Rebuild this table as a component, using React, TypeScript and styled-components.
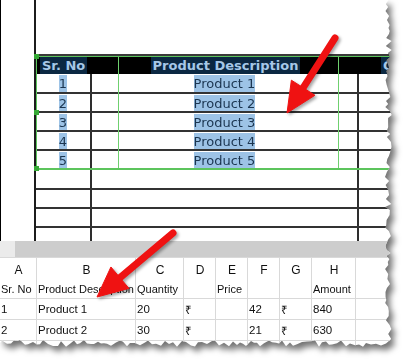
import styled, { createGlobalStyle } from 'styled-components'

const GlobalStyle = createGlobalStyle`
  * { box-sizing: border-box; }
  body {
    margin: 0;
    background: #ffffff;
  }
`

// jagged "torn paper" outline for the right and bottom edges
function tornEdge(w: number, h: number) {
  let seed = 7
  const rnd = () => {
    seed = (seed * 9301 + 49297) % 233280
    return seed / 233280
  }
  const pts: string[] = ['0px 0px']
  for (let y = 0; y < h - 6; y += 3 + Math.floor(rnd() * 3)) {
    pts.push(`${(w - 7 + rnd() * 7).toFixed(1)}px ${y}px`)
  }
  for (let x = w - 6; x > 0; x -= 3 + Math.floor(rnd() * 3)) {
    pts.push(`${x}px ${(h - 7 + rnd() * 7).toFixed(1)}px`)
  }
  pts.push(`0px ${h - 4}px`)
  return pts.join(', ')
}

const Stage = styled.div`
  position: relative;
  width: 405px;
  height: 362px;
  overflow: hidden;
  background: #ffffff;
`

const Shadow = styled.div`
  width: 392px;
  height: 347px;
  filter: drop-shadow(4px 5px 3px rgba(0, 0, 0, 0.55));
`

const Paper = styled.div`
  width: 392px;
  height: 347px;
  background: #ffffff;
  clip-path: polygon(${tornEdge(392, 347)});
  display: flex;
  flex-direction: column;
  overflow: hidden;
`

/* ---------- print layout (top) ---------- */

const Layout = styled.div`
  display: flex;
  height: 241px;
  flex: none;
`

const Margin = styled.div`
  flex: none;
  width: 36px;
  border-left: 1px solid #000;
  border-right: 2px solid #1c1c1c;
`

const Sheet = styled.div`
  position: relative;
  flex: 1;
  min-width: 0;
  display: flex;
  flex-direction: column;
  font-family: 'DejaVu Sans', Verdana, sans-serif;
  font-size: 13px;
`

const TopSpace = styled.div`
  height: 54px;
  flex: none;
`

const Row = styled.div<{ $h?: number; $line?: boolean }>`
  display: grid;
  grid-template-columns: 56px 267px minmax(0, 1fr);
  height: ${(p) => (p.$h ? `${p.$h}px` : 'auto')};
  flex: ${(p) => (p.$h ? 'none' : '1')};
  border-bottom: ${(p) => (p.$line ? '2px solid #333333' : 'none')};
`

const HeadRow = styled(Row)`
  background: #000000;
  border-top: 2px solid #3a3a3a;
`

const Cell = styled.div<{ $divider?: boolean; $start?: boolean; $pad?: number }>`
  display: flex;
  justify-content: ${(p) => (p.$start ? 'flex-start' : 'center')};
  padding-left: ${(p) => p.$pad ?? 0}px;
  overflow: hidden;
  border-right: ${(p) => (p.$divider ? '2px solid #2e2e2e' : 'none')};
`

const HeadMark = styled.span`
  display: flex;
  align-items: center;
  padding: 0 2px;
  background: #0b2842;
  color: #a6c8e8;
  font-weight: bold;
  white-space: nowrap;
`

const Mark = styled.span`
  display: flex;
  align-items: center;
  margin-top: 1px;
  background: #9dc3e6;
  color: #1b3550;
  white-space: nowrap;
`

const Selection = styled.div`
  position: absolute;
  left: 0;
  top: 56px;
  width: 400px;
  height: 114px;
  border: 1px solid #5cc45c;
  border-bottom-width: 2px;
  pointer-events: none;
`

const SelLine = styled.div<{ $x: number }>`
  position: absolute;
  top: 0;
  bottom: 0;
  left: ${(p) => p.$x}px;
  width: 1px;
  background: #6fd06f;
`

const Handle = styled.div<{ $y: number }>`
  position: absolute;
  left: -3px;
  top: ${(p) => p.$y}px;
  width: 5px;
  height: 5px;
  background: #35a935;
`

/* ---------- spreadsheet (bottom) ---------- */

const Bar = styled.div`
  display: flex;
  height: 16px;
  flex: none;
`

const BarCap = styled.div`
  width: 15px;
  background: #ebebeb;
`

const BarFill = styled.div`
  flex: 1;
  background: #cdcdcd;
`

const Grid = styled.div`
  display: grid;
  grid-template-columns: 37px 99px 48px 32px 32px 32px 32px 44px minmax(0, 1fr);
  grid-template-rows: 41px 21px 21px 21px;
  border-top: 1px solid #d9d9d9;
  font-family: 'Liberation Sans', Arial, sans-serif;
  font-size: 11.5px;
  color: #111111;
`

const GCell = styled.div<{ $tall?: boolean }>`
  display: flex;
  flex-direction: column;
  justify-content: ${(p) => (p.$tall ? 'flex-start' : 'center')};
  padding-left: 1px;
  border-right: 1px solid #d9d9d9;
  border-bottom: 1px solid #d9d9d9;
  white-space: nowrap;
`

const Letter = styled.div`
  height: 24px;
  display: flex;
  align-items: center;
  justify-content: center;
  font-size: 12px;
`

const FieldName = styled.div`
  height: 14px;
  display: flex;
  align-items: center;
  font-size: 11px;
`

const ArrowLayer = styled.svg`
  position: absolute;
  left: 0;
  top: 0;
  filter: drop-shadow(2px 2px 1.5px rgba(0, 0, 0, 0.35));
  pointer-events: none;
`

function Arrow({ tail, tip }: { tail: [number, number]; tip: [number, number] }) {
  const dx = tip[0] - tail[0]
  const dy = tip[1] - tail[1]
  const len = Math.hypot(dx, dy)
  const ux = dx / len
  const uy = dy / len
  const bx = tip[0] - ux * 30
  const by = tip[1] - uy * 30
  const px = -uy * 14
  const py = ux * 14
  return (
    <g fill="#ef1212" stroke="#ef1212">
      <line x1={tail[0]} y1={tail[1]} x2={bx + ux * 2} y2={by + uy * 2} strokeWidth={7} strokeLinecap="round" />
      <polygon points={`${tip[0]},${tip[1]} ${bx + px},${by + py} ${bx - px},${by - py}`} strokeWidth={1} strokeLinejoin="round" />
    </g>
  )
}

const columns = ['A', 'B', 'C', 'D', 'E', 'F', 'G', 'H', '']
const fields = ['Sr. No', 'Product Description', 'Quantity', '', 'Price', '', '', 'Amount', '']
const data = [
  ['1', 'Product 1', '20', '₹', '', '42', '₹', '840', ''],
  ['2', 'Product 2', '30', '₹', '', '21', '₹', '630', ''],
  ['', '', '', '', '', '', '', '', ''],
]
const products = ['1', '2', '3', '4', '5']

export default function App() {
  return (
    <Stage>
      <GlobalStyle />
      <Shadow>
        <Paper>
          <Layout>
            <Margin />
            <Sheet>
              <TopSpace />
              <HeadRow $h={20}>
                <Cell $start $pad={4}>
                  <HeadMark>Sr. No</HeadMark>
                </Cell>
                <Cell>
                  <HeadMark>Product Description</HeadMark>
                </Cell>
                <Cell $start $pad={22}>
                  <HeadMark>Quantity</HeadMark>
                </Cell>
              </HeadRow>
              {products.map((n, i) => (
                <Row key={n} $h={i === 0 ? 20 : 19} $line>
                  <Cell $divider>
                    <Mark>{n}</Mark>
                  </Cell>
                  <Cell $divider>
                    <Mark>Product {n}</Mark>
                  </Cell>
                  <Cell />
                </Row>
              ))}
              {[20, 19, 19].map((h, i) => (
                <Row key={i} $h={h} $line>
                  <Cell $divider />
                  <Cell $divider />
                  <Cell />
                </Row>
              ))}
              <Row>
                <Cell $divider />
                <Cell $divider />
                <Cell />
              </Row>
              <Selection>
                <SelLine $x={81} />
                <SelLine $x={301} />
                <Handle $y={-3} />
                <Handle $y={53} />
                <Handle $y={109} />
              </Selection>
            </Sheet>
          </Layout>
          <Bar>
            <BarCap />
            <BarFill />
          </Bar>
          <Grid>
            {columns.map((c, i) => (
              <GCell key={c + i} $tall>
                <Letter>{c}</Letter>
                <FieldName>{fields[i]}</FieldName>
              </GCell>
            ))}
            {data.map((r, ri) =>
              r.map((v, i) => (
                <GCell key={ri + '-' + i}>{v}</GCell>
              )),
            )}
          </Grid>
        </Paper>
      </Shadow>
      <ArrowLayer width={405} height={362}>
        <Arrow tail={[335, 38]} tip={[287, 113]} />
        <Arrow tail={[173, 233]} tip={[97, 297]} />
      </ArrowLayer>
    </Stage>
  )
}
